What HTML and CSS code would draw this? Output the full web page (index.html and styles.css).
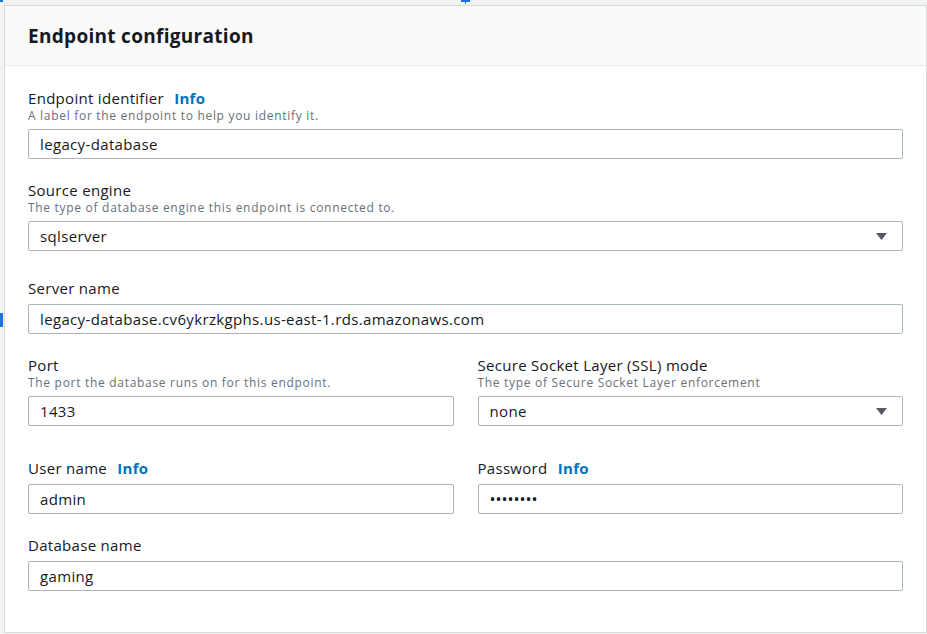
FILE: index.html
```html
<!DOCTYPE html>
<html lang="en">
<head>
    <meta charset="UTF-8">
    <meta name="viewport" content="width=device-width, initial-scale=1.0">
    <title>Endpoint configuration</title>
    <link rel="stylesheet" href="styles.css">
</head>
<body>
    <span class="handle handle-corner"></span>
    <span class="handle handle-top"></span>
    <span class="handle handle-left"></span>

    <div class="panel">
        <div class="panel-header">
            <h2>Endpoint configuration</h2>
        </div>

        <div class="panel-body">
            <div class="field">
                <label for="endpoint-id">Endpoint identifier <a href="#" class="info">Info</a></label>
                <p class="hint">A label for the endpoint to help you identify it.</p>
                <input type="text" id="endpoint-id" value="legacy-database">
            </div>

            <div class="field gap-md">
                <label>Source engine</label>
                <p class="hint">The type of database engine this endpoint is connected to.</p>
                <div class="select">
                    <span>sqlserver</span>
                    <svg width="11" height="7" viewBox="0 0 11 7"><path d="M0 0h11L5.5 7z" fill="#545b64"/></svg>
                </div>
            </div>

            <div class="field">
                <label for="server-name">Server name</label>
                <input type="text" id="server-name" value="legacy-database.cv6ykrzkgphs.us-east-1.rds.amazonaws.com">
            </div>

            <div class="row gap-lg">
                <div class="field">
                    <label for="port">Port</label>
                    <p class="hint">The port the database runs on for this endpoint.</p>
                    <input type="text" id="port" value="1433">
                </div>
                <div class="field">
                    <label>Secure Socket Layer (SSL) mode</label>
                    <p class="hint">The type of Secure Socket Layer enforcement</p>
                    <div class="select">
                        <span>none</span>
                        <svg width="11" height="7" viewBox="0 0 11 7"><path d="M0 0h11L5.5 7z" fill="#545b64"/></svg>
                    </div>
                </div>
            </div>

            <div class="row">
                <div class="field">
                    <label for="user">User name <a href="#" class="info">Info</a></label>
                    <input type="text" id="user" value="admin">
                </div>
                <div class="field">
                    <label for="password">Password <a href="#" class="info">Info</a></label>
                    <input type="password" id="password" value="password">
                </div>
            </div>

            <div class="field">
                <label for="db-name">Database name</label>
                <input type="text" id="db-name" value="gaming">
            </div>
        </div>
    </div>
</body>
</html>
```

FILE: styles.css
```css
body {
    font-family: 'Open Sans', 'Noto Sans', sans-serif;
    background-color: #f2f3f3;
    color: #16191f;
    margin: 0;
    padding: 5px 0 0 4px;
}

.handle {
    position: absolute;
    background: #1a73e8;
}

.handle-corner {
    left: 0;
    top: 0;
    width: 3px;
    height: 2px;
}

.handle-top {
    left: 461px;
    top: 0;
    width: 9px;
    height: 2px;
}

.handle-top::after {
    content: '';
    position: absolute;
    left: 4px;
    top: 2px;
    width: 1px;
    height: 2px;
    background: #1a73e8;
}

.handle-left {
    left: 0;
    top: 313px;
    width: 3px;
    height: 14px;
}

.panel {
    background: white;
    border: 1px solid #d5dbdb;
    height: 628px;
    box-sizing: border-box;
}

.panel-header {
    background: #fafafa;
    border-bottom: 1px solid #eaeded;
    height: 60px;
    box-sizing: border-box;
    padding: 0 23px;
    display: flex;
    align-items: center;
}

h2 {
    margin: 0;
    font-size: 19px;
    font-weight: 700;
    letter-spacing: 0.3px;
}

.panel-body {
    padding: 22px 23px 0 23px;
}

.field {
    margin-bottom: 21px;
}

.gap-md {
    margin-bottom: 27px;
}

.row {
    display: grid;
    grid-template-columns: 1fr 1fr;
    gap: 24px;
    margin-bottom: 21px;
}

.row.gap-lg {
    margin-bottom: 32px;
}

.row .field {
    margin-bottom: 0;
}

label {
    display: block;
    font-size: 15px;
    line-height: 20px;
    letter-spacing: 0.3px;
    margin-bottom: 6px;
}

.info {
    color: #0073bb;
    font-weight: 700;
    text-decoration: none;
    margin-left: 6px;
}

.hint {
    margin: -6px 0 5px 0;
    font-size: 12px;
    line-height: 16px;
    letter-spacing: 0.7px;
    color: #687078;
}

input[type="text"],
input[type="password"],
.select {
    display: flex;
    align-items: center;
    justify-content: space-between;
    width: 100%;
    height: 30px;
    box-sizing: border-box;
    padding: 0 15px 0 11px;
    border: 1px solid #aab7b8;
    border-radius: 2px;
    font-family: inherit;
    font-size: 15px;
    letter-spacing: 0.35px;
    color: #16191f;
    background: white;
}

input[type="password"] {
    font-size: 16px;
    letter-spacing: 0;
}
```
